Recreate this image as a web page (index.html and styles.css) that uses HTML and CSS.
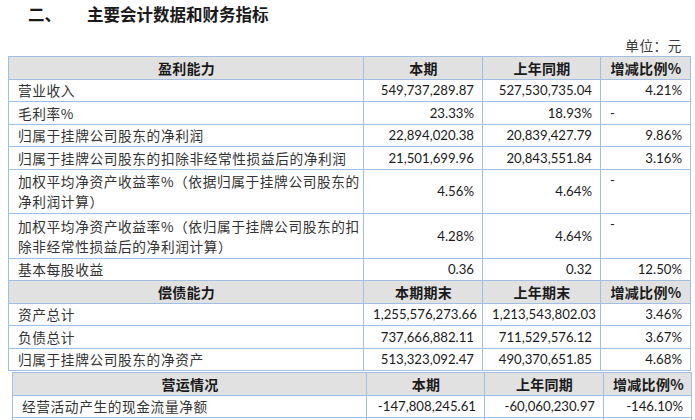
FILE: index.html
```html
<!DOCTYPE html>
<html lang="zh-CN">
<head>
<meta charset="utf-8">
<title>主要会计数据和财务指标</title>
<link rel="stylesheet" href="styles.css">
</head>
<body>
<div class="title"><span class="num">二、</span><span>主要会计数据和财务指标</span></div>
<div class="unit">单位：元</div>
<table class="fin t1">
  <colgroup><col class="c1"><col class="c2"><col class="c3"><col class="c4"></colgroup>
  <tr class="hd"><th>盈利能力</th><th>本期</th><th>上年同期</th><th>增减比例%</th></tr>
  <tr><td class="lb">营业收入</td><td class="n">549,737,289.87</td><td class="n">527,530,735.04</td><td class="n">4.21%</td></tr>
  <tr><td class="lb">毛利率%</td><td class="n">23.33%</td><td class="n">18.93%</td><td class="d">-</td></tr>
  <tr><td class="lb">归属于挂牌公司股东的净利润</td><td class="n">22,894,020.38</td><td class="n">20,839,427.79</td><td class="n">9.86%</td></tr>
  <tr><td class="lb">归属于挂牌公司股东的扣除非经常性损益后的净利润</td><td class="n">21,501,699.96</td><td class="n">20,843,551.84</td><td class="n">3.16%</td></tr>
  <tr class="dbl"><td class="lb">加权平均净资产收益率%（依据归属于挂牌公司股东的<br>净利润计算）</td><td class="n">4.56%</td><td class="n">4.64%</td><td class="d top">-</td></tr>
  <tr class="dbl"><td class="lb">加权平均净资产收益率%（依归属于挂牌公司股东的扣<br>除非经常性损益后的净利润计算）</td><td class="n">4.28%</td><td class="n">4.64%</td><td class="d top">-</td></tr>
  <tr><td class="lb">基本每股收益</td><td class="n">0.36</td><td class="n">0.32</td><td class="n">12.50%</td></tr>
  <tr class="hd"><th>偿债能力</th><th>本期期末</th><th>上年期末</th><th>增减比例%</th></tr>
  <tr><td class="lb">资产总计</td><td class="n">1,255,576,273.66</td><td class="n">1,213,543,802.03</td><td class="n">3.46%</td></tr>
  <tr><td class="lb">负债总计</td><td class="n">737,666,882.11</td><td class="n">711,529,576.12</td><td class="n">3.67%</td></tr>
  <tr><td class="lb">归属于挂牌公司股东的净资产</td><td class="n">513,323,092.47</td><td class="n">490,370,651.85</td><td class="n">4.68%</td></tr>
</table>
<table class="fin t2">
  <colgroup><col class="k1"><col class="k2"><col class="k3"><col class="k4"></colgroup>
  <tr class="hd"><th>营运情况</th><th>本期</th><th>上年同期</th><th>增减比例%</th></tr>
  <tr><td class="lb">经营活动产生的现金流量净额</td><td class="n">-147,808,245.61</td><td class="n">-60,060,230.97</td><td class="n">-146.10%</td></tr>
  <tr><td class="lb">&nbsp;</td><td class="n"></td><td class="n"></td><td class="n"></td></tr>
</table>
</body>
</html>
```
FILE: styles.css
```css
html, body {
  margin: 0;
  padding: 0;
  overflow: hidden;
  background: #ffffff;
}
body {
  width: 695px;
  height: 420px;
  font-family: "Noto Sans CJK SC", "Noto Sans", sans-serif;
  color: #222;
}
.title {
  display: flex;
  padding: 4px 0 0 28px;
  height: 20px;
  line-height: 20px;
  font-size: 16.5px;
  font-weight: bold;
  color: #1a1a1a;
}
.title .num {
  width: 59px;
}
.unit {
  margin-top: 11px;
  height: 20px;
  line-height: 20px;
  text-align: right;
  padding-right: 13px;
  font-size: 13.6px;
  letter-spacing: 0.6px;
  color: #3a3a3a;
}
.fin {
  border-collapse: collapse;
  table-layout: fixed;
}
.t1 {
  margin: 1px 0 0 8px;
  width: 682px;
}
.t2 {
  margin: 1px 0 0 12px;
  width: 679px;
}
.c1 { width: 355px; }
.c2 { width: 119px; }
.c3 { width: 118px; }
.c4 { width: 90px; }
.k1 { width: 354px; }
.k2 { width: 118px; }
.k3 { width: 119px; }
.k4 { width: 88px; }
.fin th, .fin td {
  border: 1px solid #9fc0e3;
  padding: 0 8px 0 9px;
  height: 21.5px;
  line-height: 20px;
  white-space: nowrap;
}
.fin .dbl td {
  height: 43.5px;
}
.hd th {
  background: #e1e1e1;
  font-weight: bold;
  font-size: 14px;
  letter-spacing: 0.3px;
  text-align: center;
  color: #1a1a1a;
}
.lb {
  font-size: 13.7px;
  letter-spacing: 0.6px;
  color: #333;
  text-align: left;
}
.n {
  font-family: "Lato", "Liberation Sans", sans-serif;
  font-size: 13.2px;
  text-align: right;
  color: #1a1a1a;
}
.d {
  font-family: "Lato", "Liberation Sans", sans-serif;
  font-size: 13.2px;
  text-align: left;
}
.top {
  vertical-align: top;
  padding-top: 2px;
}
```
